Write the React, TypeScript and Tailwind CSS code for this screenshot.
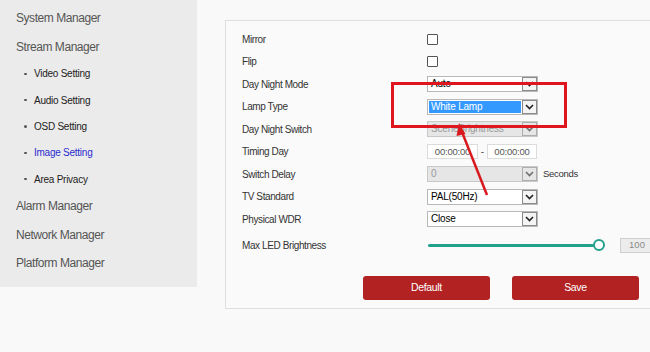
import { ReactNode } from "react"

const font = { fontFamily: '"Liberation Sans", Arial, sans-serif' }

const Chevron = () => (
  <svg width="9" height="6" viewBox="0 0 9 6">
    <path d="M1 1 L4.5 4.5 L8 1" fill="none" stroke="#222" strokeWidth="1.6" />
  </svg>
)

const Select = ({ value, disabled, selected }: { value: string; disabled?: boolean; selected?: boolean }) => (
  <div
    className={`flex w-[111px] h-[16px] border ${disabled ? "border-[#c8c8c8] bg-[#e6e6e6]" : "border-[#b8b8b8] bg-white"}`}
  >
    <div className="flex-1 flex items-center p-[1px]">
      <span
        className={`h-full w-full flex items-center px-[2px] text-[10px] tracking-[-0.2px] leading-none ${
          selected ? "bg-[#3399ff] text-white" : disabled ? "text-[#9a9a9a]" : "text-black"
        }`}
      >
        {value}
      </span>
    </div>
    <div
      className={`w-[15px] h-full flex items-center justify-center border border-[#8a8a8a] ${
        disabled ? "bg-[#e6e6e6] opacity-60" : "bg-[#f4f4f4]"
      }`}
    >
      <Chevron />
    </div>
  </div>
)

const Checkbox = () => <div className="w-[11px] h-[11px] border border-[#555] bg-white rounded-[1px]" />

const Row = ({ label, children }: { label: string; children?: ReactNode }) => (
  <div className="flex items-center h-[22.5px]">
    <div className="w-[185px] text-[10px] tracking-[-0.4px] text-[#333]">{label}</div>
    {children}
  </div>
)

const Heading = ({ text }: { text: string }) => (
  <div className="h-[28.5px] flex items-center pl-[16px] text-[12px] tracking-[-0.45px] text-[#555]">{text}</div>
)

const Sub = ({ text, active }: { text: string; active?: boolean }) => (
  <div className="h-[26.3px] flex items-center pl-[24px]">
    <span className="w-[2.5px] h-[2.5px] rounded-full bg-[#555] mr-[7.5px]" />
    <span className={`text-[10px] tracking-[-0.25px] ${active ? "text-[#2b2bd0]" : "text-[#222]"}`}>{text}</span>
  </div>
)

const TimeBox = ({ w }: { w: string }) => (
  <div
    className={`${w} h-[15px] border border-[#dcdcdc] bg-white flex items-center justify-center text-[9.5px] tracking-[-0.2px] text-[#555]`}
  >
    00:00:00
  </div>
)

export default function App() {
  return (
    <div className="relative w-[650px] h-[352px] overflow-hidden bg-[#f9f9f9] flex items-start" style={font}>
      {/* sidebar */}
      <div className="w-[197px] shrink-0 bg-[#ebebeb] pt-[3.75px] pb-[9px]">
        <Heading text="System Manager" />
        <Heading text="Stream Manager" />
        <Sub text="Video Setting" />
        <Sub text="Audio Setting" />
        <Sub text="OSD Setting" />
        <Sub text="Image Setting" active />
        <Sub text="Area Privacy" />
        <Heading text="Alarm Manager" />
        <Heading text="Network Manager" />
        <Heading text="Platform Manager" />
      </div>

      {/* settings panel */}
      <div className="ml-[28px] mt-[20px] w-[460px] shrink-0 border border-[#dedede] bg-[#fafafa] pl-[16px] pt-[7px] pb-[8px]">
        <Row label="Mirror">
          <Checkbox />
        </Row>
        <Row label="Flip">
          <Checkbox />
        </Row>
        <Row label="Day Night Mode">
          <Select value="Auto" />
        </Row>
        <Row label="Lamp Type">
          <Select value="White Lamp" selected />
        </Row>
        <Row label="Day Night Switch">
          <Select value="SceneBrightness" disabled />
        </Row>
        <Row label="Timing Day">
          <TimeBox w="w-[51px]" />
          <div className="w-[9px] text-center text-[10px] text-[#555]">-</div>
          <TimeBox w="w-[50px]" />
        </Row>
        <Row label="Switch Delay">
          <Select value="0" disabled />
          <span className="ml-[5px] text-[9.5px] tracking-[-0.3px] text-[#333]">Seconds</span>
        </Row>
        <Row label="TV Standard">
          <Select value="PAL(50Hz)" />
        </Row>
        <Row label="Physical WDR">
          <Select value="Close" />
        </Row>
        <div className="mt-[3.5px]">
          <Row label="Max LED Brightness">
            <div className="flex items-center ml-[1px]">
              <div className="w-[166px] h-[3px] rounded-full bg-[#22a08c]" />
              <div className="w-[12px] h-[12px] rounded-full border-2 border-[#22a08c] bg-white -ml-[1px]" />
              <div className="ml-[15px] w-[34px] h-[15px] bg-[#ececec] border border-[#cfcfcf] flex items-center justify-center text-[9.5px] text-[#8a8a8a]">
                100
              </div>
            </div>
          </Row>
        </div>
        <div className="flex mt-[19.5px] ml-[121px] gap-[22px]">
          <button className="w-[127px] h-[24px] rounded-[3px] bg-[#b22222] text-white text-[10.5px] tracking-[-0.35px]">
            Default
          </button>
          <button className="w-[127px] h-[24px] rounded-[3px] bg-[#b22222] text-white text-[10.5px] tracking-[-0.35px]">
            Save
          </button>
        </div>
      </div>

      {/* red annotation */}
      <svg className="absolute left-0 top-0 pointer-events-none" width="650" height="352" viewBox="0 0 650 352">
        <rect x="392.5" y="83.5" width="173" height="43" fill="none" stroke="#e0161e" strokeWidth="3" />
        <line x1="487" y1="195" x2="462" y2="132" stroke="#d81a20" strokeWidth="2.5" />
        <path d="M459 123 L465.5 134 L456.5 136 Z" fill="#d81a20" />
      </svg>
    </div>
  )
}
